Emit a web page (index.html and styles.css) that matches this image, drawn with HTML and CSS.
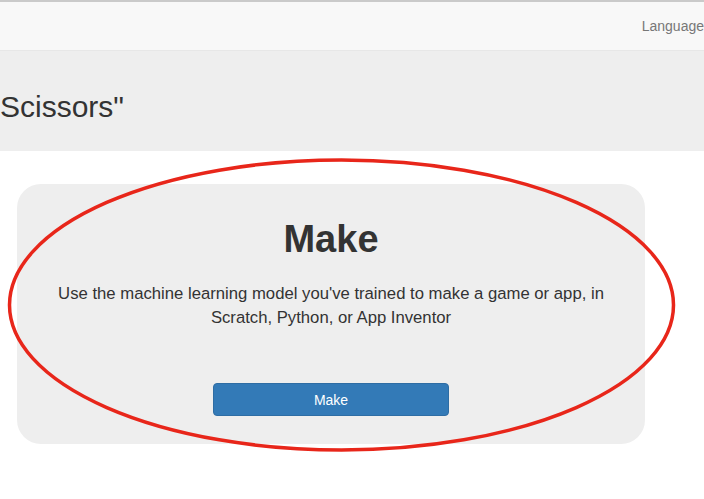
FILE: index.html
```html
<!DOCTYPE html>
<html lang="en">
<head>
<meta charset="UTF-8">
<meta name="viewport" content="width=device-width, initial-scale=1.0">
<title>Make</title>
<link rel="stylesheet" href="styles.css">
</head>
<body>

<nav class="navbar">
    <a class="nav-link">Language</a>
</nav>

<div class="jumbotron">
    <h2>Scissors"</h2>
</div>

<div class="container">
    <div class="card">
        <h1>Make</h1>
        <p>Use the machine learning model you've trained to make a game or app, in Scratch, Python, or App Inventor</p>
        <button class="btn">Make</button>
    </div>
</div>

<!-- red highlight drawn over the card -->
<svg class="highlight" width="704" height="499" viewBox="0 0 704 499">
    <ellipse cx="341.5" cy="305" rx="332" ry="145" fill="none" stroke="#e8261a" stroke-width="3.5"/>
</svg>

</body>
</html>
```

FILE: styles.css
```css
body {
    font-family: "Liberation Sans", Arial, sans-serif;
    margin: 0;
    background: #fff;
    color: #333;
    overflow: hidden;
}
.navbar {
    display: flex;
    justify-content: flex-end;
    align-items: center;
    height: 48px;
    background: #f8f8f8;
    border-top: 2px solid #cacaca;
    border-bottom: 1px solid #e7e7e7;
    overflow: hidden;
}
.nav-link {
    color: #777;
    font-size: 14px;
    white-space: nowrap;
}
.jumbotron {
    background: #eee;
    padding: 39px 0 28px 0;
}
.jumbotron h2 {
    margin: 0;
    font-size: 30px;
    font-weight: normal;
    line-height: 33px;
}
.container {
    margin: 33px 59px 0 17px;
}
.card {
    background: #eee;
    border-radius: 24px;
    padding: 34px 30px 28px;
    text-align: center;
}
.card h1 {
    margin: 0;
    font-size: 38px;
    line-height: 42px;
    font-weight: bold;
}
.card p {
    margin: 22px 0 0 0;
    font-size: 16.7px;
    line-height: 24px;
}
.btn {
    margin-top: 53px;
    width: 236px;
    height: 33px;
    background: #337ab7;
    border: 1px solid #2e6da4;
    border-radius: 4px;
    color: #fff;
    font-family: inherit;
    font-size: 14px;
    cursor: pointer;
}
.highlight {
    position: absolute;
    top: 0;
    left: 0;
    pointer-events: none;
}
```
